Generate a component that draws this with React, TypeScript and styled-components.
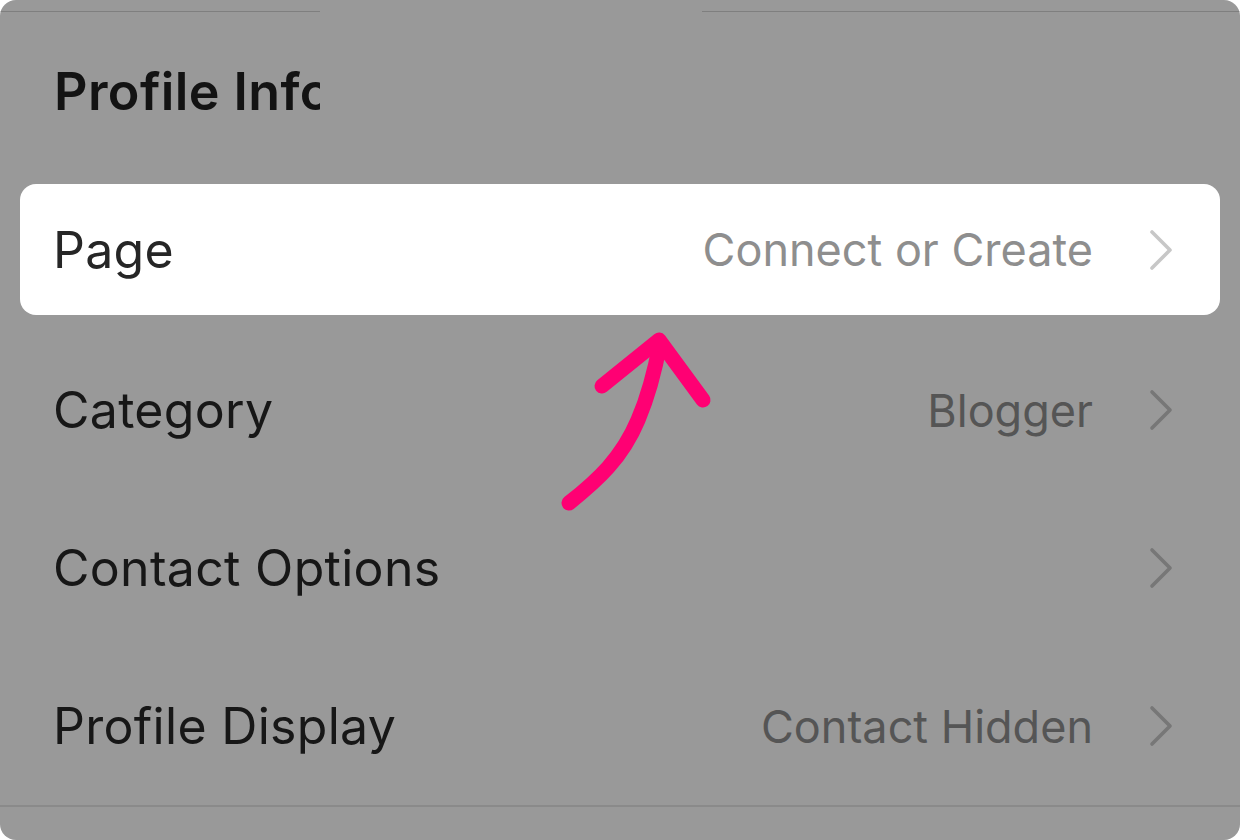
import React from "react";
import styled, { createGlobalStyle } from "styled-components";

const Global = createGlobalStyle`
  html, body { margin: 0; padding: 0; background: #ffffff; }
  body { font-family: Inter, "Noto Sans", "Liberation Sans", sans-serif; -webkit-font-smoothing: antialiased; }
`;

const Screen = styled.div`
  position: relative;
  width: 1240px;
  height: 840px;
  background: #999999;
  border-radius: 16px;
  overflow: hidden;
  display: flex;
  flex-direction: column;
`;

const TopRules = styled.div`
  display: flex;
  height: 12px;
  align-items: flex-end;
`;

const Rule = styled.div<{ $w?: number; $offset?: number }>`
  height: 1px;
  background: #7f7f7f;
  ${(p) => (p.$w ? `width: ${p.$w}px;` : `flex: 1;`)}
  margin-left: ${(p) => p.$offset ?? 0}px;
`;

const Header = styled.div`
  height: 161px;
  box-sizing: border-box;
  padding-top: 54px;
`;

const HeaderClip = styled.div`
  width: 320px;
  overflow: hidden;
  white-space: nowrap;
`;

const Title = styled.h2`
  margin: 0 0 0 54px;
  font-size: 52px;
  line-height: 52px;
  font-weight: 600;
  color: #131313;
  letter-spacing: 0.4px;
`;

const List = styled.div`
  display: flex;
  flex-direction: column;
`;

const Row = styled.div<{ $active?: boolean }>`
  display: flex;
  align-items: center;
  box-sizing: border-box;
  height: ${(p) => (p.$active ? 131 : 158)}px;
  margin: ${(p) => (p.$active ? "11px 20px 16px" : "0")};
  padding: ${(p) => (p.$active ? "0 47px 0 33px" : "0 67px 0 53px")};
  background: ${(p) => (p.$active ? "#ffffff" : "transparent")};
  border-radius: ${(p) => (p.$active ? 16 : 0)}px;
`;

const Label = styled.span<{ $active?: boolean }>`
  flex: 1;
  font-size: 50px;
  font-weight: 400;
  letter-spacing: 0.3px;
  color: ${(p) => (p.$active ? "#262626" : "#171717")};
`;

const Value = styled.span<{ $active?: boolean }>`
  font-size: 45px;
  font-weight: 400;
  color: ${(p) => (p.$active ? "#8e8e8e" : "#555555")};
  margin-right: 56px;
`;

const BottomRule = styled.div`
  height: 2px;
  background: #8a8a8a;
`;

const ArrowLayer = styled.svg`
  position: absolute;
  left: 0;
  top: 0;
  pointer-events: none;
`;

const Chevron: React.FC<{ active?: boolean }> = ({ active }) => (
  <svg width="24" height="42" viewBox="0 0 24 42" style={{ display: "block" }}>
    <polyline
      points="3,3 21,21 3,39"
      fill="none"
      stroke={active ? "#c7c7c7" : "#777777"}
      strokeWidth="3.6"
      strokeLinecap="round"
      strokeLinejoin="round"
    />
  </svg>
);

const rows = [
  { label: "Page", value: "Connect or Create", active: true },
  { label: "Category", value: "Blogger" },
  { label: "Contact Options", value: "" },
  { label: "Profile Display", value: "Contact Hidden" },
];

export default function App() {
  return (
    <>
      <Global />
      <Screen>
        <TopRules>
          <Rule $w={320} />
          <Rule $offset={382} />
        </TopRules>
        <Header>
          <HeaderClip>
            <Title>Profile Info</Title>
          </HeaderClip>
        </Header>
        <List>
          {rows.map((r) => (
            <Row key={r.label} $active={r.active}>
              <Label $active={r.active}>{r.label}</Label>
              {r.value && <Value $active={r.active}>{r.value}</Value>}
              <Chevron active={r.active} />
            </Row>
          ))}
        </List>
        <BottomRule />
        <ArrowLayer width="1240" height="840" viewBox="0 0 1240 840">
          <g fill="none" stroke="#ff0073" strokeWidth="15" strokeLinecap="round" strokeLinejoin="round">
            <path d="M569 503 C 598 480, 622 458, 638 420 C 650 392, 656 365, 660 343" />
            <path d="M602 386 L 659 340 L 703 400" />
          </g>
        </ArrowLayer>
      </Screen>
    </>
  );
}
